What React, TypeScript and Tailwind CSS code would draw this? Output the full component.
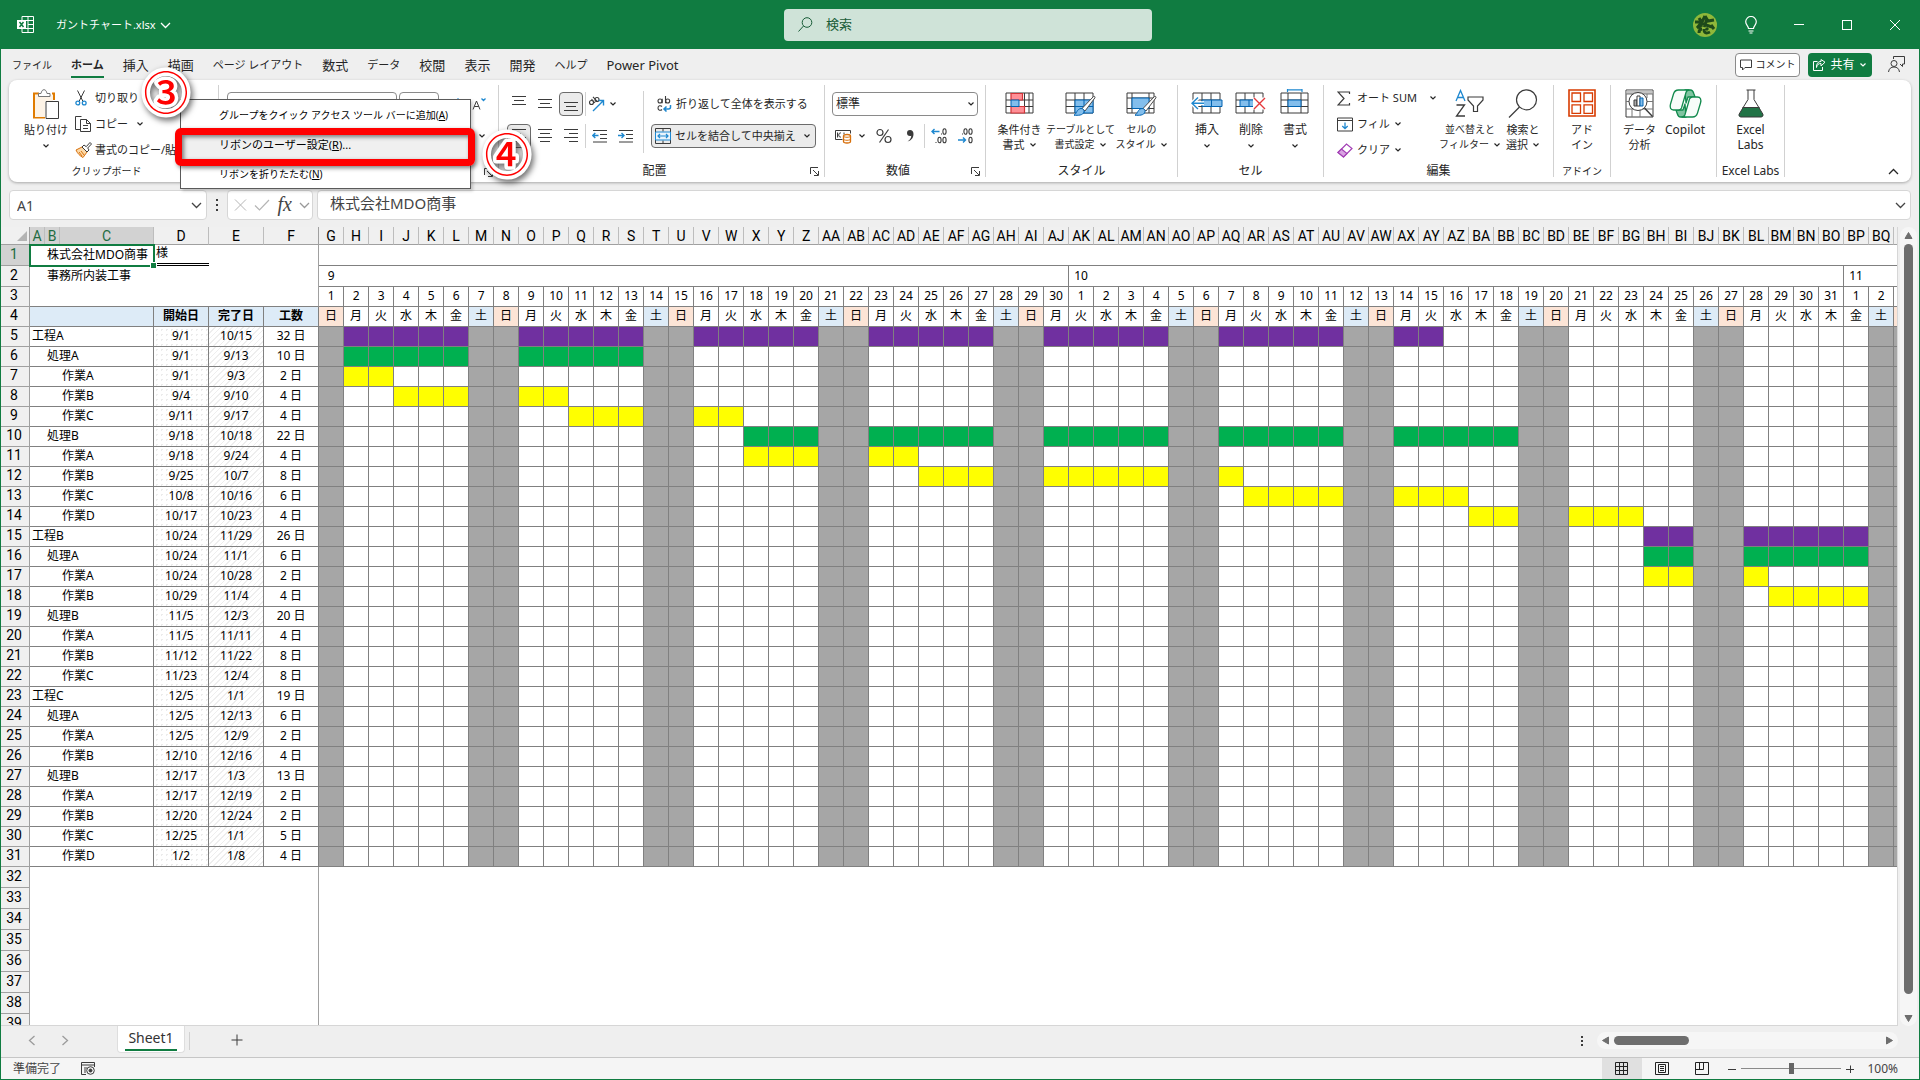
import type { ReactNode } from "react";
import { clsx } from "clsx";

type Task = {
  level: 0 | 1 | 2;
  name: string;
  start: string;
  end: string;
  days: number;
};

const TASKS: Task[] = [
  { level: 0, name: "工程A", start: "9/1", end: "10/15", days: 32 },
  { level: 1, name: "処理A", start: "9/1", end: "9/13", days: 10 },
  { level: 2, name: "作業A", start: "9/1", end: "9/3", days: 2 },
  { level: 2, name: "作業B", start: "9/4", end: "9/10", days: 4 },
  { level: 2, name: "作業C", start: "9/11", end: "9/17", days: 4 },
  { level: 1, name: "処理B", start: "9/18", end: "10/18", days: 22 },
  { level: 2, name: "作業A", start: "9/18", end: "9/24", days: 4 },
  { level: 2, name: "作業B", start: "9/25", end: "10/7", days: 8 },
  { level: 2, name: "作業C", start: "10/8", end: "10/16", days: 6 },
  { level: 2, name: "作業D", start: "10/17", end: "10/23", days: 4 },
  { level: 0, name: "工程B", start: "10/24", end: "11/29", days: 26 },
  { level: 1, name: "処理A", start: "10/24", end: "11/1", days: 6 },
  { level: 2, name: "作業A", start: "10/24", end: "10/28", days: 2 },
  { level: 2, name: "作業B", start: "10/29", end: "11/4", days: 4 },
  { level: 1, name: "処理B", start: "11/5", end: "12/3", days: 20 },
  { level: 2, name: "作業A", start: "11/5", end: "11/11", days: 4 },
  { level: 2, name: "作業B", start: "11/12", end: "11/22", days: 8 },
  { level: 2, name: "作業C", start: "11/23", end: "12/4", days: 8 },
  { level: 0, name: "工程C", start: "12/5", end: "1/1", days: 19 },
  { level: 1, name: "処理A", start: "12/5", end: "12/13", days: 6 },
  { level: 2, name: "作業A", start: "12/5", end: "12/9", days: 2 },
  { level: 2, name: "作業B", start: "12/10", end: "12/16", days: 4 },
  { level: 1, name: "処理B", start: "12/17", end: "1/3", days: 13 },
  { level: 2, name: "作業A", start: "12/17", end: "12/19", days: 2 },
  { level: 2, name: "作業B", start: "12/20", end: "12/24", days: 2 },
  { level: 2, name: "作業C", start: "12/25", end: "1/1", days: 5 },
  { level: 2, name: "作業D", start: "1/2", end: "1/8", days: 4 },
];

const WEEK = ["日", "月", "火", "水", "木", "金", "土"];
const DAY_COLS = 64;
const MONTH_START: Record<number, number> = { 9: 0, 10: 30, 11: 61, 12: 91, 1: 122 };
const MONTHS = [
  { label: 9, span: 30 },
  { label: 10, span: 31 },
  { label: 11, span: DAY_COLS - 61 },
];
const BAR = ["bg-[#7030a0]", "bg-[#00b050]", "bg-[#ffff00]"];
const INDENT = ["pl-[2px]", "pl-[17px]", "pl-[32px]"];

const days = Array.from({ length: DAY_COLS }, (_, i) => i);

const dayIndex = (date: string) => {
  const [m, d] = date.split("/").map(Number);
  return MONTH_START[m] + d - 1;
};

const dayOfMonth = (i: number) => (i < 30 ? i + 1 : i < 61 ? i - 29 : i - 60);

const columnName = (n: number): string =>
  n <= 26
    ? String.fromCharCode(64 + n)
    : columnName(Math.floor((n - 1) / 26)) + String.fromCharCode(65 + ((n - 1) % 26));

const isWeekend = (i: number) => i % 7 === 0 || i % 7 === 6;

/* ---------- icons ---------- */

type SvgProps = { w: number; h: number; className?: string; children: ReactNode };

const Svg = ({ w, h, className, children }: SvgProps) => (
  <svg
    width={w}
    height={h}
    viewBox={`0 0 ${w} ${h}`}
    fill="none"
    stroke="#3b3b3b"
    className={clsx("shrink-0", className)}
    aria-hidden="true"
  >
    {children}
  </svg>
);

const Chevron = ({ className }: { className?: string }) => (
  <Svg w={8} h={6} className={className}>
    <path d="M1.5 1.5 4 4l2.5-2.5" stroke="currentColor" strokeWidth="1.2" />
  </Svg>
);

const BigChevron = ({ className }: { className?: string }) => (
  <Svg w={11} h={7} className={className}>
    <path d="M1 1l4.500 4.500L10 1" stroke="currentColor" strokeWidth="1.300" />
  </Svg>
);

const ExcelIcon = () => (
  <Svg w={17} h={17}>
    <path d="M5 4V.5h11.500v16H5V13M11 .5v16M5 4.500h11.500M11 8.500h5.500M5 12.500h11.500" stroke="#fff" />
    <path d="M0 4h9v9H0z" fill="#fff" stroke="none" />
    <path d="M2.500 6l4 5M6.500 6l-4 5" stroke="#107c41" strokeWidth="1.500" />
  </Svg>
);

const PasteIcon = () => (
  <Svg w={28} h={31}>
    <path d="M7 4.500H2v24h11M20 4.500h2V11" stroke="#e07b00" strokeWidth="2" />
    <path d="M3 6h18v6h-8v16H3z" fill="#fdf3e6" stroke="none" />
    <path d="M6.500 7.500v-3H9C9.500 2 10.500.700 12 .700S14.500 2 15 4.500h3v3z" fill="#fff" stroke="#777" />
    <path d="M14 12.500h12.500v17H14z" fill="#fff" />
  </Svg>
);

const CutIcon = () => (
  <Svg w={12} h={16}>
    <path d="M2.500.5l5.500 11M9.500.5L4 11.500" />
    <circle cx="2.800" cy="13" r="1.900" stroke="#1e88d0" strokeWidth="1.300" />
    <circle cx="9.200" cy="13" r="1.900" stroke="#1e88d0" strokeWidth="1.300" />
  </Svg>
);

const CopyIcon = () => (
  <Svg w={17} h={16}>
    <path d="M5 13.500H.5V.5h6M5.500 3.500h6l4 4v8h-10zM11.500 3.500v4h4M8 9.500h5M8 12.500h5" />
  </Svg>
);

const FormatPainterIcon = () => (
  <Svg w={17} h={16}>
    <path d="M1 8l6-3 5 5-4 5.500C5 14 2.500 11.500 1 8z" fill="#fbd9a8" stroke="#d8700c" />
    <path d="M4 10l3 4M6 9l3 4" stroke="#d8700c" />
    <path d="M7 5l2-2 2.200 1.700L15 .5l1.500 1.500-3.800 4L14 8l-2 2z" fill="#fff" />
  </Svg>
);

const Lines = ({ rows }: { rows: [number, number, number][] }) => (
  <Svg w={16} h={16}>
    {rows.map(([x1, x2, y]) => (
      <path key={y} d={`M${x1} ${y + 0.5}H${x2}`} />
    ))}
  </Svg>
);

const OrientationIcon = () => (
  <Svg w={17} h={16}>
    <g strokeWidth="1.100">
      <circle cx="3.500" cy="6.500" r="2" />
      <path d="M3.500 3l3.500 4" />
      <path d="M5 .800l4.500 5" />
      <circle cx="9" cy="3.500" r="2" />
    </g>
    <path d="M5 15L15 5M10.500 4.500H15.500V9.500" stroke="#1e88d0" strokeWidth="1.400" />
  </Svg>
);

const IndentIcon = ({ flip }: { flip?: boolean }) => (
  <Svg w={16} h={14}>
    <path d="M1 1.500h14M8 5.500h7M8 9.500h7M1 13h14" />
    <path
      d={flip ? "M0 6.500h6M3.500 4L6 6.500 3.500 9" : "M6.500 6.500H.800M3.300 4L.800 6.500 3.300 9"}
      stroke="#1e88d0"
      strokeWidth="1.400"
    />
  </Svg>
);

const WrapIcon = () => (
  <Svg w={15} h={16}>
    <g strokeWidth="1.100">
      <circle cx="3" cy="5" r="2" />
      <path d="M5.200 2.800v4.400M8.500 0v7.200" />
      <circle cx="10.700" cy="5" r="2" />
      <path d="M5 10.500C3.500 9 1 9.700 1 12s2.500 3 4 1.500" />
    </g>
    <path d="M13.500 9v2c0 1.500-.5 2-2 2H7M9.500 10.500L7 13l2.500 2.500" stroke="#1e88d0" strokeWidth="1.500" />
  </Svg>
);

const MergeIcon = () => (
  <Svg w={16} h={16}>
    <path d="M.5.5h15v15H.5zM8 .5v3M8 12.500v3" />
    <path d="M.5 4h15v8H.5z" fill="#eaf4fc" stroke="#1e88d0" />
    <path d="M3 8h10M5 6L3 8l2 2M11 6l2 2-2 2" stroke="#1e88d0" strokeWidth="1.200" />
  </Svg>
);

const CurrencyIcon = () => (
  <Svg w={17} h={15}>
    <path d="M7.500 10.500H.5v-9h15v3" />
    <path d="M6 4c-3-1-3 5 0 4M2.500 3.500v5M9 3.500v2" />
    <path d="M8.500 7c0-2 7-2 7 0v5.500c0 2-7 2-7 0z" fill="#fff" stroke="#d8700c" strokeWidth="1.300" />
    <path d="M8.500 7c0 1.700 7 1.700 7 0M8.500 10c0 1.700 7 1.700 7 0" stroke="#d8700c" />
  </Svg>
);

const DecimalIcon = ({ flip }: { flip?: boolean }) => (
  <Svg w={17} h={16}>
    <g strokeWidth="1.100">
      {flip ? (
        <>
          <ellipse cx="8.500" cy="3.500" rx="1.600" ry="2.800" />
          <ellipse cx="13.500" cy="3.500" rx="1.600" ry="2.800" />
          <ellipse cx="13.500" cy="12" rx="1.600" ry="2.800" />
          <path d="M5 6h1" />
        </>
      ) : (
        <>
          <ellipse cx="13.500" cy="3.500" rx="1.600" ry="2.800" />
          <ellipse cx="8.500" cy="12" rx="1.600" ry="2.800" />
          <ellipse cx="13.500" cy="12" rx="1.600" ry="2.800" />
          <path d="M10 6h1M4.500 14.500h1" />
        </>
      )}
    </g>
    <path
      d={flip ? "M1 12h7.500M6 9.500L8.500 12 6 14.500" : "M8.500 3.500H1M3.500 1L1 3.500 3.500 6"}
      stroke="#1e88d0"
      strokeWidth="1.400"
    />
  </Svg>
);

const Brush = () => (
  <>
    <path d="M28.500 7.500c1-.5 2 .3 1.300 1.500L20 22l-3-2.500z" fill="#fff" stroke="#4a4a4a" />
    <path d="M16 19.500c2 0 3.500 1.500 3 3.500-1 3.500-6 3.500-10 3.200 3-1.700 2.500-6 7-6.700z" fill="#83beec" stroke="#0063b1" />
  </>
);

const ConditionalIcon = () => (
  <Svg w={30} h={28}>
    <path d="M1 4h27v20H1zM1 11h27M1 17.500h27M19.500 4v20M24 4v20" />
    <path d="M6 4.500h11.500V11H6zM6 17.500h13.500V24H6z" fill="#ff8f96" stroke="#d13438" strokeWidth="1.200" />
    <path d="M6 11h8v6.500H6z" fill="#83beec" stroke="#0063b1" />
  </Svg>
);

const TableFormatIcon = () => (
  <Svg w={32} h={28}>
    <path d="M1 4h27v20H1zM1 11h27M1 17.500h27M10 4v20M19 4v20" />
    <path d="M10 11h18v13H10zM10 17.500h18M19 11v13" fill="#83beec" stroke="#0063b1" />
    <Brush />
  </Svg>
);

const CellStyleIcon = () => (
  <Svg w={32} h={28}>
    <path d="M1 4h27v20H1zM1 9h27M6 4v20M23 4v20M1 19.500h27" />
    <path d="M6 9h17v10.500H6z" fill="#83beec" stroke="#0063b1" />
    <Brush />
  </Svg>
);

const InsertIcon = () => (
  <Svg w={32} h={28}>
    <path d="M2 4h27v20H2zM2 11h27M2 17.500h27M11 4v20M20 4v20" />
    <path d="M11 11h20v6.500H11zM20.500 11v6.500" fill="#83beec" stroke="#0063b1" />
    <path d="M1 14.200h12M7 8.500L1 14.200 7 20" stroke="#fff" strokeWidth="4" />
    <path d="M1 14.200h12M7 8.500L1 14.200 7 20" stroke="#1e88d0" strokeWidth="1.400" />
  </Svg>
);

const DeleteIcon = () => (
  <Svg w={32} h={28}>
    <path d="M1 4h27v20H1zM1 11h27M1 17.500h27M10 4v20M19 4v20" />
    <path d="M5 11h15v6.500H5zM14 11v6.500" fill="#83beec" stroke="#0063b1" />
    <path d="M18 8.500h14v12H18z" fill="#fff" stroke="none" />
    <path d="M19 9l11 11M30 9L19 20" stroke="#e5383b" strokeWidth="1.400" />
  </Svg>
);

const CellFormatIcon = () => (
  <Svg w={30} h={28}>
    <path d="M7.500 0v3M22 0v3M7.500 .800H22" stroke="#1e88d0" strokeWidth="1.200" />
    <path d="M1 4h27v20H1zM1 11h27M1 17.500h27M8 4v20M21 4v20" />
    <path d="M8 11h13v6.500H8z" fill="#83beec" stroke="#0063b1" />
  </Svg>
);

const SumIcon = () => (
  <Svg w={14} h={15}>
    <path d="M12.500 3V1H1l6 6.500L1 14h11.500v-2" strokeWidth="1.200" />
  </Svg>
);

const FillIcon = () => (
  <Svg w={16} h={15}>
    <path d="M.5 1h15v13H.5zM.5 3.500h15" />
    <path d="M8 5.500v6M5.300 9L8 11.700 10.700 9" stroke="#1e88d0" strokeWidth="1.300" />
  </Svg>
);

const ClearIcon = () => (
  <Svg w={16} h={15}>
    <path d="M1 9.500L9.500 1 15 5.500 6.500 14z" fill="#fff" stroke="#a33fb5" strokeWidth="1.200" />
    <path d="M1 9.500l3.500-3.500L10 10.500 6.500 14z" fill="#d9a3e2" stroke="#a33fb5" strokeWidth="1.200" />
  </Svg>
);

const SortIcon = () => (
  <Svg w={30} h={29}>
    <path d="M1 12L5.500 1.500 10 12M2.500 8.500h6" stroke="#1e88d0" strokeWidth="1.300" />
    <path d="M1.500 16H9.500L1.500 27H10" strokeWidth="1.300" />
    <path d="M13 8h15v3l-5.500 6v5.500h-4V17L13 11z" strokeWidth="1.200" />
  </Svg>
);

const FindIcon = () => (
  <Svg w={30} h={29}>
    <circle cx="18.500" cy="10.800" r="10" strokeWidth="1.200" />
    <path d="M11.500 18L1 28.500" strokeWidth="1.200" />
  </Svg>
);

const AddinIcon = () => (
  <Svg w={28} h={28}>
    <g stroke="#d83b01" strokeWidth="1.300">
      <path d="M1 1h26v26H1z" strokeWidth="1.600" />
      <path d="M4 4h8.500v8.500H4zM16 4h8.500v8.500H16zM4 15.800h8.500v8.500H4zM16 15.800h8.500v8.500H16z" />
    </g>
  </Svg>
);

const AnalysisIcon = () => (
  <Svg w={29} h={29}>
    <path d="M1 1h27v27H1z" />
    <path d="M1.500 1.500h26V5h-26z" fill="#c4c4c4" stroke="none" />
    <path d="M1 5h27M1 12.500h27M1 20h27M7 20v8M15 20v8M7 5v3M22 5v4" stroke="#777" />
    <circle cx="13" cy="12.500" r="9" fill="#fff" />
    <path d="M19.500 19l8 8.500" strokeWidth="1.400" />
    <path d="M9 11h3v6H9z" fill="#aaa" />
    <path d="M12 7h3v10h-3z" fill="#fff" />
    <path d="M15 9h3v8h-3z" fill="#83beec" stroke="#0063b1" />
  </Svg>
);

const CopilotIcon = () => (
  <Svg w={33} h={29}>
    <g stroke="#128a4d" strokeWidth="1.300" strokeLinejoin="round">
      <path d="M16 1h5.500c2 0 2.700 1.500 3.300 3.500L26 8h-7l-2 6z" fill="#7fc4a0" />
      <path d="M17 28h-5.500c-2 0-2.700-1.500-3.300-3.500L7 21h7l2-6z" fill="#7fc4a0" />
      <path d="M7 21H4.500C1.500 21 .5 18.500 1.500 15L4.500 5c.8-2.800 2.500-4 5-4H20c-1.500 0-2.500 1-3 2.500L12.500 19c-.5 1.300-1.500 2-3 2z" fill="#f7fcf9" />
      <path d="M26 8h2.500c3 0 4 2.500 3 6l-3 10c-.8 2.800-2.500 4-5 4H13c1.500 0 2.500-1 3-2.500L20.500 10c.5-1.300 1.500-2 3-2z" fill="#f7fcf9" />
    </g>
  </Svg>
);

const FlaskIcon = () => (
  <Svg w={26} h={29}>
    <path d="M5 18.500h16l4 7c.5 1.500-.3 2.500-1.500 2.500h-21C1.300 28 .5 27 1 25.500z" fill="#217346" stroke="none" />
    <path d="M8.500 1h9M10 1v9.500L1.200 25c-.6 1.500.2 3 1.800 3h20c1.600 0 2.400-1.500 1.800-3L16 10.500V1M4.500 18.500h17" />
  </Svg>
);

const LauncherIcon = () => (
  <Svg w={9} h={9}>
    <path d="M.5 7V.5H8M3 3l5 5M8.500 4v4.500H4" />
  </Svg>
);

/* ---------- ribbon pieces ---------- */

type GroupProps = {
  label?: string;
  width: string;
  launcher?: boolean;
  small?: boolean;
  children: ReactNode;
};

const Group = ({ label, width, launcher, small, children }: GroupProps) => (
  <section
    aria-label={label}
    className={clsx("flex shrink-0 flex-col border-r border-[#d1d1d1]", width)}
  >
    <div className="flex flex-1">{children}</div>
    <div
      className={clsx(
        "grid items-center leading-3",
        launcher ? "grid-cols-[1fr_14px]" : "grid-cols-1",
      )}
    >
      <span
        className={clsx(
          "flex justify-center whitespace-nowrap",
          small ? "text-[10px]" : "text-[12px]",
        )}
      >
        {label}
      </span>
      {launcher && (
        <button type="button" aria-label={`${label}の詳細`}>
          <LauncherIcon />
        </button>
      )}
    </div>
  </section>
);

type BigButtonProps = {
  icon: ReactNode;
  lines: string[];
  width: string;
  chevron?: "inline" | "below";
  size?: string;
};

const BigButton = ({ icon, lines, width, chevron, size = "text-[11px]" }: BigButtonProps) => (
  <button
    type="button"
    className={clsx("flex shrink-0 flex-col items-center pt-1 leading-[15px]", width, size)}
  >
    <span className="flex h-[33px] items-start">{icon}</span>
    {lines.map((line, i) => (
      <span key={line} className="flex items-center gap-1 whitespace-nowrap">
        {line}
        {chevron === "inline" && i === lines.length - 1 && <Chevron />}
      </span>
    ))}
    {chevron === "below" && <Chevron className="mt-[6px]" />}
  </button>
);

type SmallButtonProps = { icon: ReactNode; label: string; chevron?: string };

const SmallButton = ({ icon, label, chevron }: SmallButtonProps) => (
  <button type="button" className="flex h-[26px] items-center whitespace-nowrap text-[11px]">
    <span className="flex w-5 shrink-0 justify-start">{icon}</span>
    {label}
    {chevron && <Chevron className={chevron} />}
  </button>
);

const IconButton = ({
  label,
  pressed,
  children,
}: {
  label: string;
  pressed?: boolean;
  children: ReactNode;
}) => (
  <button
    type="button"
    aria-label={label}
    className={clsx(
      "flex h-6 min-w-6 items-center justify-center gap-1 rounded",
      pressed && "border border-[#6b6b6b] bg-[#ebebeb]",
    )}
  >
    {children}
  </button>
);

const VLine = () => <span className="h-6 w-px bg-[#d1d1d1]" />;

const TitleBar = () => (
  <header className="flex h-[49px] shrink-0 items-center bg-[#107c41] text-white">
    <div className="flex flex-1 items-center pl-4">
      <ExcelIcon />
      <button type="button" className="ml-[22px] flex items-center gap-1 pt-[2px] text-[11px]">
        ガントチャート.xlsx
        <BigChevron />
      </button>
    </div>
    <label className="flex h-8 w-[368px] items-center rounded bg-[#cfe3d8] pl-[14px] text-[#185c37]">
      <Svg w={15} h={15}>
        <circle cx="9" cy="5.500" r="4.800" stroke="#185c37" />
        <path d="M5.500 9L.5 14.500" stroke="#185c37" />
      </Svg>
      <input
        type="text"
        aria-label="検索"
        placeholder="検索"
        className="ml-[13px] flex-1 bg-transparent text-[13px] outline-none placeholder:text-[#185c37]"
      />
    </label>
    <div className="flex flex-1 items-center justify-end">
      <button type="button" aria-label="アカウント" className="flex w-11 justify-center">
        <Svg w={24} h={24}>
          <circle cx="12" cy="12" r="12" fill="#8fb83a" stroke="none" />
          <path
            d="M2 9h7l3-6M12 3l3 5 6-1M9 9l-5 6M14 6l-3 8M6 5l4 6 9 3M4 15l5-3M6 20c0-3 1-4 3-4M11 16c0 4 2 5 6 3M18 12l3 4M13 15l2 2"
            stroke="#1d4a1a"
            strokeWidth="3"
          />
        </Svg>
      </button>
      <button type="button" aria-label="ヒント" className="flex w-12 justify-center">
        <Svg w={12} h={18}>
          <path d="M3.500 12.500C3.500 10 .7 9 .7 5.800a5.300 5.300 0 0110.600 0C11.300 9 8.500 10 8.500 12.500zM3.500 15h5M4.500 17h3" stroke="#fff" strokeWidth="1.200" />
        </Svg>
      </button>
      <button type="button" aria-label="最小化" className="flex h-6 w-12 items-center justify-center">
        <span className="h-px w-[10px] bg-white" />
      </button>
      <button type="button" aria-label="最大化" className="flex h-6 w-12 items-center justify-center">
        <span className="h-[10px] w-[10px] border border-white" />
      </button>
      <button type="button" aria-label="閉じる" className="flex w-12 justify-center">
        <Svg w={12} h={12}>
          <path d="M1 1l10 10M11 1L1 11" stroke="#fff" />
        </Svg>
      </button>
    </div>
  </header>
);

const TABS = [
  { label: "ファイル", size: "text-[10px]" },
  { label: "ホーム", size: "text-[11px]" },
  { label: "挿入", size: "text-[13px]" },
  { label: "描画", size: "text-[13px]" },
  { label: "ページ レイアウト", size: "text-[11px]" },
  { label: "数式", size: "text-[13px]" },
  { label: "データ", size: "text-[11px]" },
  { label: "校閲", size: "text-[13px]" },
  { label: "表示", size: "text-[13px]" },
  { label: "開発", size: "text-[13px]" },
  { label: "ヘルプ", size: "text-[11px]" },
  { label: "Power Pivot", size: "text-[13px]" },
];

const RibbonTabs = () => (
  <div className="flex h-[31px] shrink-0 items-center pr-[14px] pl-[11px]">
    <nav className="flex flex-1 items-center gap-[19px]">
      {TABS.map(({ label, size }) => (
        <button
          key={label}
          type="button"
          className={clsx(
            "h-[27px] whitespace-nowrap border-b-2 pt-1",
            size,
            label === "ホーム" ? "border-[#107c41] font-bold" : "border-transparent",
          )}
        >
          {label}
        </button>
      ))}
    </nav>
    <button
      type="button"
      className="flex h-6 w-[65px] items-center justify-center gap-1 rounded border border-[#8a8a8a] bg-white text-[10px]"
    >
      <Svg w={12} h={12}>
        <path d="M.5 1h11v7.500H5L2.500 11V8.500h-2z" />
      </Svg>
      コメント
    </button>
    <button
      type="button"
      className="ml-2 flex h-6 w-16 items-center justify-center gap-1 rounded bg-[#107c41] text-[12px] text-white"
    >
      <Svg w={13} h={12}>
        <path d="M4.500 2.500h-4v9h9V8M3.500 8.500C4 5.500 5.500 4.500 8 4.500V7l4-3.800L8 .5v2C5 2.500 3.500 4.500 3.500 8.500z" stroke="#fff" />
      </Svg>
      共有
      <Chevron />
    </button>
    <button type="button" aria-label="フィードバック" className="ml-4">
      <Svg w={17} h={17}>
        <path d="M5.500 3V.5h11V8h-2v2.500L12 8" />
        <circle cx="6" cy="7.500" r="3" />
        <path d="M.5 16c.5-3.500 2.500-5 5.500-5s5 1.500 5.500 5" />
      </Svg>
    </button>
  </div>
);

const Ribbon = () => (
  <div className="mx-2 flex h-[102px] shrink-0 rounded-lg bg-white py-[5px] shadow-[0_1px_3px_rgba(0,0,0,0.3)]">
    <Group label="クリップボード" width="w-[210px]" small launcher>
      <div className="ml-[14px]">
        <BigButton icon={<PasteIcon />} lines={["貼り付け"]} width="w-[46px]" chevron="below" />
      </div>
      <div className="ml-[6px] flex flex-col">
        <SmallButton icon={<CutIcon />} label="切り取り" />
        <SmallButton icon={<CopyIcon />} label="コピー" chevron="ml-2" />
        <SmallButton icon={<FormatPainterIcon />} label="書式のコピー/貼り付け" />
      </div>
    </Group>

    <Group width="w-[280px]" label="" launcher>
      <div className="flex flex-1 flex-col gap-2 pt-[7px] pl-2">
        <div className="flex items-center gap-[2px]">
          <select aria-label="フォント" className="h-6 w-[170px] appearance-none rounded border border-[#8a8a8a]" />
          <select aria-label="フォント サイズ" className="h-6 w-[40px] appearance-none rounded border border-[#8a8a8a]" />
          <IconButton label="フォント サイズの拡大">
            <Svg w={15} h={14}>
              <path d="M1 12.500L5 2l4 10.500M2.500 9h5" />
              <path d="M10 4l2-2 2 2" stroke="#1e88d0" strokeWidth="1.300" />
            </Svg>
          </IconButton>
          <IconButton label="フォント サイズの縮小">
            <Svg w={15} h={14}>
              <path d="M1 12.500L4.500 4l3.500 8.500M2.300 9.500h4.500" />
              <path d="M9.500 1.500l2 2 2-2" stroke="#1e88d0" strokeWidth="1.300" />
            </Svg>
          </IconButton>
        </div>
        <div className="flex h-6 items-center justify-end pr-3">
          <Chevron />
        </div>
      </div>
    </Group>

    <Group label="配置" width="w-[326px]" launcher>
      <div className="flex flex-col gap-2 pt-[7px] pl-2">
        <div className="flex gap-[2px]">
          <IconButton label="上揃え">
            <Lines rows={[[1, 15, 0], [3, 13, 4], [1, 15, 8]]} />
          </IconButton>
          <IconButton label="上下中央揃え">
            <Lines rows={[[1, 15, 3], [3, 13, 7], [1, 15, 11]]} />
          </IconButton>
          <IconButton label="下揃え" pressed>
            <Lines rows={[[1, 15, 6], [3, 13, 10], [1, 15, 14]]} />
          </IconButton>
          <VLine />
          <IconButton label="方向">
            <OrientationIcon />
            <Chevron />
          </IconButton>
        </div>
        <div className="flex gap-[2px]">
          <IconButton label="左揃え" pressed>
            <Lines rows={[[1, 15, 1], [1, 10, 5], [1, 15, 9], [1, 10, 13]]} />
          </IconButton>
          <IconButton label="中央揃え">
            <Lines rows={[[1, 15, 1], [3, 13, 5], [1, 15, 9], [3, 13, 13]]} />
          </IconButton>
          <IconButton label="右揃え">
            <Lines rows={[[1, 15, 1], [6, 15, 5], [1, 15, 9], [6, 15, 13]]} />
          </IconButton>
          <VLine />
          <IconButton label="インデントを減らす">
            <IndentIcon />
          </IconButton>
          <IconButton label="インデントを増やす">
            <IndentIcon flip />
          </IconButton>
        </div>
      </div>
      <span className="mt-[6px] ml-[5px] h-[62px] w-px bg-[#d1d1d1]" />
      <div className="ml-[7px] flex w-[165px] flex-col gap-2 pt-[7px] text-[11px]">
        <button type="button" className="flex h-6 items-center gap-1 pl-[6px] whitespace-nowrap">
          <WrapIcon />
          折り返して全体を表示する
        </button>
        <button
          type="button"
          className="flex h-6 items-center gap-1 rounded border border-[#6b6b6b] bg-[#ebebeb] pr-1 pl-[3px] whitespace-nowrap"
        >
          <MergeIcon />
          セルを結合して中央揃え
          <Chevron className="ml-auto" />
        </button>
      </div>
    </Group>

    <Group label="数値" width="w-[161px]" launcher>
      <div className="flex flex-col gap-2 pt-[7px] pl-[7px]">
        <div className="flex h-6 w-[146px] items-center rounded border border-[#8a8a8a] bg-white pr-[2px]">
          <select
            aria-label="数値の書式"
            className="h-full flex-1 appearance-none bg-transparent pl-[3px] text-[12px] outline-none"
          >
            <option>標準</option>
          </select>
          <Chevron />
        </div>
        <div className="flex gap-[2px]">
          <button type="button" aria-label="通貨" className="flex w-[38px] items-center justify-between pr-1 pl-[3px]">
            <CurrencyIcon />
            <Chevron />
          </button>
          <IconButton label="パーセント">
            <Svg w={16} h={16}>
              <circle cx="4" cy="4.500" r="3" strokeWidth="1.200" />
              <circle cx="12" cy="11.500" r="3" strokeWidth="1.200" />
              <path d="M12.500 1.500l-9 13" strokeWidth="1.200" />
            </Svg>
          </IconButton>
          <IconButton label="桁区切り">
            <Svg w={8} h={14}>
              <path d="M4 1a3 3 0 100 6c.6 0 1 0 1.300-.3C5 9 4 11 1.500 12.500 5.500 11.500 7.500 8.500 7.500 5 7.500 2.500 6 1 4 1z" fill="#3b3b3b" stroke="none" />
            </Svg>
          </IconButton>
          <VLine />
          <IconButton label="小数点以下の表示桁数を増やす">
            <DecimalIcon />
          </IconButton>
          <IconButton label="小数点以下の表示桁数を減らす">
            <DecimalIcon flip />
          </IconButton>
        </div>
      </div>
    </Group>

    <Group label="スタイル" width="w-[192px]">
      <div className="flex pl-[3px]">
        <BigButton icon={<ConditionalIcon />} lines={["条件付き", "書式"]} width="w-[61px]" chevron="inline" />
        <BigButton
          icon={<TableFormatIcon />}
          lines={["テーブルとして", "書式設定"]}
          width="w-[61px]"
          chevron="inline"
          size="text-[10px]"
        />
        <BigButton icon={<CellStyleIcon />} lines={["セルの", "スタイル"]} width="w-[61px]" chevron="inline" size="text-[10px]" />
      </div>
    </Group>

    <Group label="セル" width="w-[146px]">
      <div className="flex pl-[7px]">
        <BigButton icon={<InsertIcon />} lines={["挿入"]} width="w-11" chevron="below" size="text-[12px]" />
        <BigButton icon={<DeleteIcon />} lines={["削除"]} width="w-11" chevron="below" size="text-[12px]" />
        <BigButton icon={<CellFormatIcon />} lines={["書式"]} width="w-11" chevron="below" size="text-[12px]" />
      </div>
    </Group>

    <Group label="編集" width="w-[230px]">
      <div className="flex w-[117px] flex-col pl-[13px]">
        <SmallButton icon={<SumIcon />} label="オート SUM" chevron="ml-3" />
        <SmallButton icon={<FillIcon />} label="フィル" chevron="ml-1" />
        <SmallButton icon={<ClearIcon />} label="クリア" chevron="ml-1" />
      </div>
      <div className="flex">
        <BigButton icon={<SortIcon />} lines={["並べ替えと", "フィルター"]} width="w-[58px]" chevron="inline" size="text-[10px]" />
        <BigButton icon={<FindIcon />} lines={["検索と", "選択"]} width="w-[48px]" chevron="inline" />
      </div>
    </Group>

    <Group label="アドイン" width="w-[57px]" small>
      <BigButton icon={<AddinIcon />} lines={["アド", "イン"]} width="w-[56px]" />
    </Group>

    <Group width="w-[106px]">
      <div className="flex pl-[6px]">
        <BigButton icon={<AnalysisIcon />} lines={["データ", "分析"]} width="w-[45px]" />
        <BigButton icon={<CopilotIcon />} lines={["Copilot"]} width="w-[46px]" size="text-[12px]" />
      </div>
    </Group>

    <Group label="Excel Labs" width="w-[68px]">
      <BigButton icon={<FlaskIcon />} lines={["Excel", "Labs"]} width="w-[67px]" size="text-[12px]" />
    </Group>

    <div className="flex flex-1 items-end justify-end pr-3 pb-[2px]">
      <button type="button" aria-label="リボンを折りたたむ">
        <BigChevron className="rotate-180" />
      </button>
    </div>
  </div>
);

const FormulaBar = () => (
  <div className="mx-2 mt-2 mb-[7px] flex h-[30px] shrink-0 items-center text-[#444]">
    <div className="flex h-full w-[198px] items-center rounded border border-[#d6d6d6] bg-white pr-1">
      <input
        type="text"
        aria-label="名前ボックス"
        defaultValue="A1"
        className="min-w-0 flex-1 bg-transparent pl-[7px] text-[14px] outline-none"
      />
      <BigChevron />
    </div>
    <Svg w={20} h={16}>
      <path d="M9 2h2v2H9zM9 7h2v2H9zM9 12h2v2H9z" fill="#3b3b3b" stroke="none" />
    </Svg>
    <div className="flex h-full w-[86px] items-center justify-between rounded border border-[#d6d6d6] bg-white pr-[2px] pl-[6px]">
      <button type="button" aria-label="キャンセル">
        <Svg w={13} h={12}>
          <path d="M1 .5l11 11M12 .5l-11 11" stroke="#b5b5b5" />
        </Svg>
      </button>
      <button type="button" aria-label="入力">
        <Svg w={16} h={12}>
          <path d="M1 6.500l4.500 4.500L15 1" stroke="#b5b5b5" strokeWidth="1.200" />
        </Svg>
      </button>
      <button type="button" className="pb-[2px] font-['Liberation_Serif',serif] text-[20px] leading-none italic">
        fx
      </button>
      <BigChevron className="text-[#999]" />
    </div>
    <div className="ml-1 flex h-full flex-1 items-center rounded border border-[#d6d6d6] bg-white pr-1">
      <input
        type="text"
        aria-label="数式バー"
        defaultValue="株式会社MDO商事"
        className="min-w-0 flex-1 bg-transparent pb-[3px] pl-3 text-[15px] outline-none"
      />
      <BigChevron />
    </div>
  </div>
);

/* ---------- worksheet ---------- */

const HEAD_FONT = "font-[Roboto,sans-serif] text-[14px] font-normal";

const RowHead = ({ n, selected }: { n: number; selected?: boolean }) => (
  <th
    scope="row"
    className={clsx(
      "border-r border-b border-[#a0a0a0] pr-[2px] text-center",
      HEAD_FONT,
      selected ? "bg-[#d2d2d2] text-[#1e6b41]" : "bg-[#f0f0f0] text-black",
    )}
  >
    {n}
  </th>
);

const Sheet = () => (
  <div className="min-w-0 flex-1 overflow-hidden border-r border-b border-[#d6d6d6] bg-white">
    <table className="w-[1919px] table-fixed border-separate border-spacing-0 text-[12px] leading-[17px] text-black">
      <colgroup>
        <col className="w-[29px]" />
        <col className="w-[15px]" />
        <col className="w-[15px]" />
        <col className="w-[94px]" />
        <col className="w-[55px]" />
        <col className="w-[55px]" />
        <col className="w-[55px]" />
        {days.map((i) => (
          <col key={i} className="w-[25px]" />
        ))}
      </colgroup>
      <thead>
        <tr className="h-[18px]">
          <th className="border-r border-b border-[#a0a0a0] bg-[#f0f0f0]">
            <Svg w={10} h={10} className="ml-4">
              <path d="M10 0v10H0z" fill="#b4b4b4" stroke="none" />
            </Svg>
          </th>
          {Array.from({ length: DAY_COLS + 6 }, (_, i) => (
            <th
              key={i}
              scope="col"
              className={clsx(
                "h-[18px] border-r border-b border-[#a0a0a0] pt-px text-center leading-4",
                HEAD_FONT,
                i < 3 ? "bg-[#d2d2d2] text-[#1e6b41]" : "bg-[#f0f0f0]",
                i !== 5 && "border-r-[#bdbdbd]",
              )}
            >
              {columnName(i + 1)}
            </th>
          ))}
        </tr>
      </thead>
      <tbody className="[&_td]:pb-[2px] [&_th]:pb-[2px]">
        <tr className="h-[21px]">
          <RowHead n={1} selected />
          <td colSpan={3} className="relative pl-[17px] whitespace-nowrap">
            株式会社MDO商事
            <span className="pointer-events-none absolute -top-px -right-px -bottom-px -left-px border-2 border-[#107c41]" />
            <span className="absolute -right-[2px] -bottom-[2px] h-[5px] w-[5px] bg-[#107c41] outline outline-white" />
          </td>
          <td className="border-b-3 border-double border-black pl-[2px] leading-4">様</td>
          <td colSpan={2} className="border-r border-[#a0a0a0]" />
          <td colSpan={DAY_COLS} className="border-b border-[#808080]" />
        </tr>
        <tr className="h-[21px]">
          <RowHead n={2} />
          <td colSpan={6} className="border-r border-[#a0a0a0] pl-[17px]">
            事務所内装工事
          </td>
          {MONTHS.map((m) => (
            <td key={m.label} colSpan={m.span} className="border-r border-b border-[#808080]">
              <span className="block w-6 text-center">{m.label}</span>
            </td>
          ))}
        </tr>
        <tr className="h-5">
          <RowHead n={3} />
          <td colSpan={6} className="border-r border-b border-[#808080] border-r-[#a0a0a0]" />
          {days.map((i) => (
            <td key={i} className="border-r border-b border-[#808080] text-center">
              {dayOfMonth(i)}
            </td>
          ))}
        </tr>
        <tr className="h-5">
          <RowHead n={4} />
          <td colSpan={3} className="border-r border-b border-[#808080] bg-[#ddebf7]" />
          {["開始日", "完了日", "工数"].map((label) => (
            <th key={label} scope="col" className="border-r border-b border-[#808080] bg-[#ddebf7] font-bold">
              {label}
            </th>
          ))}
          {days.map((i) => (
            <td
              key={i}
              className={clsx(
                "border-r border-b border-[#808080] text-center",
                i % 7 === 0 && "bg-[#fce4d6]",
                i % 7 === 6 && "bg-[#ddebf7]",
              )}
            >
              {WEEK[i % 7]}
            </td>
          ))}
        </tr>
        {TASKS.map((task, r) => {
          const from = dayIndex(task.start);
          const to = dayIndex(task.end);
          return (
            <tr key={r} className="h-5">
              <RowHead n={r + 5} />
              <td colSpan={3} className={clsx("border-r border-b border-[#808080]", INDENT[task.level])}>
                {task.name}
              </td>
              <td className="border-r border-b border-[#808080] bg-[radial-gradient(#ececec_1px,transparent_1px)] bg-size-[5px_5px] text-center">
                {task.start}
              </td>
              <td className="border-r border-b border-[#808080] bg-[repeating-linear-gradient(135deg,#eeeeee_0_1px,transparent_1px_4px)] text-center">
                {task.end}
              </td>
              <td className="border-r border-b border-[#808080] text-center">{task.days} 日</td>
              {days.map((i) => (
                <td
                  key={i}
                  className={clsx(
                    "border-r border-b border-[#808080]",
                    isWeekend(i) ? "bg-[#a6a6a6]" : i >= from && i <= to && BAR[task.level],
                  )}
                />
              ))}
            </tr>
          );
        })}
        {Array.from({ length: 8 }, (_, i) => (
          <tr key={i} className="h-[21px]">
            <RowHead n={i + 32} />
            <td colSpan={6} className="border-r border-[#a0a0a0]" />
            <td colSpan={DAY_COLS} />
          </tr>
        ))}
      </tbody>
    </table>
  </div>
);

const Arrow = ({ d }: { d: string }) => (
  <Svg w={9} h={9}>
    <path d={d} fill="#6e6e6e" stroke="#6e6e6e" strokeLinejoin="round" />
  </Svg>
);

const VerticalScroll = () => (
  <div className="mx-[2px] flex w-[17px] shrink-0 flex-col items-center gap-1 rounded-full bg-[#f6f6f6] pt-1 pb-[3px]">
    <Arrow d="M1 7.500h7L4.500 1.500z" />
    <div className="w-[9px] flex-1 rounded-full bg-[#6e6e6e]" />
    <div className="h-3" />
    <Arrow d="M1 1.500h7L4.500 7.500z" />
  </div>
);

const SheetTabs = () => (
  <div className="flex h-[31px] shrink-0 items-start">
    <div className="flex h-7 w-[116px] items-center gap-[25px] pl-[27px]">
      <button type="button" aria-label="前のシート">
        <Svg w={8} h={11}>
          <path d="M6.500 1L1.500 5.500l5 4.500" stroke="#9b9b9b" strokeWidth="1.300" />
        </Svg>
      </button>
      <button type="button" aria-label="次のシート">
        <Svg w={8} h={11}>
          <path d="M1.500 1l5 4.500-5 4.500" stroke="#9b9b9b" strokeWidth="1.300" />
        </Svg>
      </button>
    </div>
    <button
      type="button"
      className="h-[27px] rounded-b border border-t-0 border-[#dedede] bg-white px-[7px] text-[#333]"
    >
      <span className="block w-[52px] border-b-2 border-[#107c41] text-center text-[14px] leading-[22px]">
        Sheet1
      </span>
    </button>
    <span className="mt-[6px] ml-1 h-[18px] w-px bg-[#d1d1d1]" />
    <button type="button" aria-label="新しいシート" className="mt-2 ml-[41px]">
      <Svg w={12} h={12}>
        <path d="M6 .5v11M.5 6h11" />
      </Svg>
    </button>
    <div className="flex h-[29px] flex-1 items-center justify-end">
      <Svg w={4} h={12} className="mr-[13px]">
        <path d="M1 1h2v2H1zM1 5h2v2H1zM1 9h2v2H1z" fill="#3b3b3b" stroke="none" />
      </Svg>
      <div className="mr-[21px] flex h-[17px] w-[301px] items-center gap-1 rounded-full bg-[#f6f6f6] px-1">
        <Arrow d="M7.500 1v7L1.500 4.500z" />
        <div className="h-[9px] w-[75px] rounded-full bg-[#6e6e6e]" />
        <span className="flex-1" />
        <Arrow d="M1.500 1v7L7.500 4.500z" />
      </div>
    </div>
  </div>
);

const StatusBar = () => (
  <footer className="flex h-[22px] shrink-0 items-center border-t border-[#c6c6c6] bg-[#f5f5f5] text-[12px] text-[#444]">
    <span className="ml-3">準備完了</span>
    <button type="button" aria-label="マクロの記録" className="ml-5">
      <Svg w={15} h={13}>
        <path d="M5 12.500H.5V.5h13V5M.5 3h13M3 6h3M3 8h2M3 10h2" />
        <circle cx="9.500" cy="8.500" r="3.800" />
        <circle cx="9.500" cy="8.500" r="1.500" fill="#3b3b3b" />
      </Svg>
    </button>
    <div className="ml-auto flex h-full items-center">
      <button type="button" aria-label="標準" className="flex h-full w-10 items-center justify-center bg-[#e0e0e0]">
        <Svg w={14} h={13}>
          <path d="M.5.5h12v12H.5zM.5 4.500h12M.5 8.500h12M4.500.5v12M8.500.5v12" stroke="#222" />
        </Svg>
      </button>
      <button type="button" aria-label="ページ レイアウト" className="flex w-10 justify-center">
        <Svg w={14} h={13}>
          <path d="M.5.5h13v12H.5zM3.500 2.500h7v8h-7zM5 4.500h4M5 6.500h4M5 8.500h4" stroke="#222" />
        </Svg>
      </button>
      <button type="button" aria-label="改ページ プレビュー" className="flex w-10 justify-center">
        <Svg w={14} h={13}>
          <path d="M.5.5h13v12H.5zM.5 7.500h8V.5M4.500.5v7" stroke="#222" />
        </Svg>
      </button>
      <button type="button" aria-label="縮小" className="ml-[6px]">
        <Svg w={8} h={8}>
          <path d="M0 4.500h8" />
        </Svg>
      </button>
      <input
        type="range"
        aria-label="ズーム"
        min={0}
        max={200}
        defaultValue={100}
        className="mx-[5px] h-3 w-[100px] appearance-none bg-[linear-gradient(#8a8a8a,#8a8a8a)] bg-size-[100%_1px] bg-center bg-no-repeat [&::-webkit-slider-thumb]:h-[11px] [&::-webkit-slider-thumb]:w-[5px] [&::-webkit-slider-thumb]:appearance-none [&::-webkit-slider-thumb]:bg-[#666]"
      />
      <button type="button" aria-label="拡大">
        <Svg w={8} h={8}>
          <path d="M0 4.500h8M4.500 .500v8" />
        </Svg>
      </button>
      <span className="mr-[21px] ml-[13px]">100%</span>
    </div>
  </footer>
);

/* ---------- overlays ---------- */

type MenuItemProps = { label: string; accessKey: string; after?: string; className?: string };

const MenuItem = ({ label, accessKey, after, className }: MenuItemProps) => (
  <button
    type="button"
    role="menuitem"
    className={clsx("w-full pl-[38px] text-left whitespace-nowrap", className)}
  >
    {label}(<u>{accessKey}</u>){after}
  </button>
);

const ContextMenu = () => (
  <div
    role="menu"
    className="absolute top-[99px] left-[179px] flex w-[291px] flex-col border border-[#5a5a5a] bg-white text-[10px] text-black shadow-[2px_2px_3px_rgba(0,0,0,0.2)]"
  >
    <MenuItem className="h-[30px]" label="グループをクイック アクセス ツール バーに追加" accessKey="A" />
    <MenuItem className="h-[30px] bg-[#f0f0f0] text-[11px]" label="リボンのユーザー設定" accessKey="R" after="..." />
    <MenuItem className="h-[28px]" label="リボンを折りたたむ" accessKey="N" />
  </div>
);

const StepMark = ({ mark, className }: { mark: string; className: string }) => (
  <svg
    width="60"
    height="60"
    viewBox="0 0 60 60"
    className={clsx("absolute drop-shadow-[2px_3px_3px_rgba(0,0,0,0.6)]", className)}
  >
    <text
      x="30"
      y="47"
      textAnchor="middle"
      fill="#ff0000"
      stroke="#ffffff"
      strokeWidth="7"
      strokeLinejoin="round"
      paintOrder="stroke"
      className="font-['Noto_Sans_CJK_JP',sans-serif] text-[45px] font-medium"
    >
      {mark}
    </text>
  </svg>
);

export default function App() {
  return (
    <div className="relative flex h-screen flex-col overflow-hidden border-r border-b border-l border-[#107c41] bg-[#efefef] font-['Noto_Sans','Noto_Sans_CJK_JP',sans-serif] text-[#262626]">
      <TitleBar />
      <RibbonTabs />
      <Ribbon />
      <FormulaBar />
      <main className="flex min-h-0 flex-1">
        <Sheet />
        <VerticalScroll />
      </main>
      <SheetTabs />
      <StatusBar />

      <ContextMenu />
      <div className="pointer-events-none absolute top-[128px] left-[174px] h-[38px] w-[300px] rounded-md border-[7px] border-[#ff0000] shadow-[2px_2px_4px_rgba(0,0,0,0.5),inset_2px_2px_4px_rgba(0,0,0,0.5)]" />
      <StepMark mark="③" className="top-[63px] left-[135px]" />
      <StepMark mark="④" className="top-[125px] left-[476px]" />
    </div>
  );
}
